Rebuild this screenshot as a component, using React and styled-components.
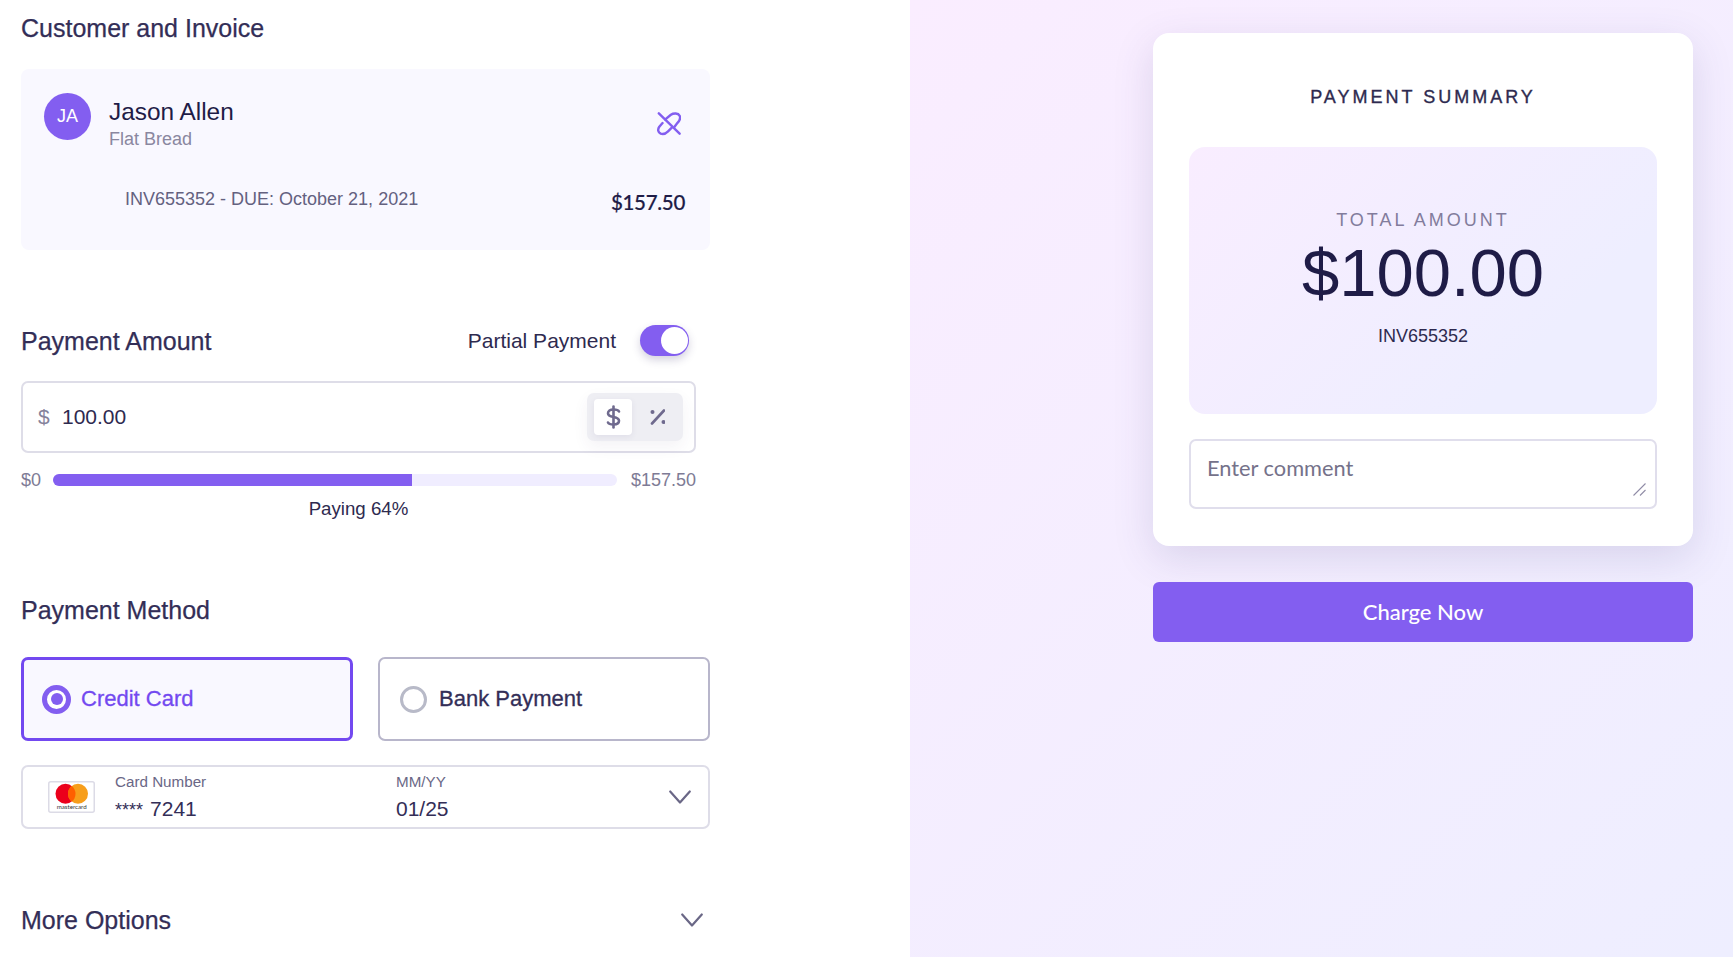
import React from "react";
import styled, { createGlobalStyle } from "styled-components";

const Global = createGlobalStyle`
  html, body { margin: 0; padding: 0; height: 100%; background: #fff; overflow: hidden; }
  #root { height: 100%; }
  * { box-sizing: border-box; }
  body { font-family: "Liberation Sans", Arial, sans-serif; color: #2e2a4f; }
`;

const Page = styled.div`
  display: flex;
  width: 1733px;
  height: 957px;
  overflow: hidden;
`;

const LeftPanel = styled.main`
  width: 910px;
  flex: none;
  padding: 0 200px 0 21px;
  background: #fff;
`;

const RightPanel = styled.aside`
  flex: 1;
  padding: 33px 40px 0 243px;
  background: linear-gradient(135deg, #faedff 0%, #eeeeff 100%);
`;

const Heading = styled.h2`
  margin: ${(p) => p.$top || 0}px 0 0;
  font-size: 25px;
  line-height: 32px;
  font-weight: 400;
  color: #332e57;
  -webkit-text-stroke: 0.25px #332e57;
`;

const TopHeading = styled(Heading)`
  padding-top: 12px;
`;

const CustomerCard = styled.section`
  margin-top: 25px;
  height: 181px;
  padding: 24px 25px 0 23px;
  background: #f9f8ff;
  border-radius: 8px;
`;

const CustomerRow = styled.div`
  display: flex;
  align-items: flex-start;
`;

const Avatar = styled.div`
  width: 47px;
  height: 47px;
  border-radius: 50%;
  background: #835ef0;
  color: #fff;
  font-size: 18px;
  display: flex;
  align-items: center;
  justify-content: center;
`;

const CustomerInfo = styled.div`
  margin: 4px 0 0 18px;
`;

const CustomerName = styled.div`
  font-size: 24.4px;
  line-height: 30px;
  color: #1f1c47;
`;

const CustomerCompany = styled.div`
  font-size: 18px;
  line-height: 24px;
  color: #8a879f;
`;

const UnlinkButton = styled.div`
  margin: 19px 4px 0 auto;
  height: 24px;
  color: #835ef0;
`;

const InvoiceRow = styled.div`
  display: flex;
  justify-content: space-between;
  padding: 36px 0 0 81px;
`;

const InvoiceText = styled.div`
  font-size: 18px;
  line-height: 24px;
  color: #64617f;
`;

const InvoiceAmount = styled.div`
  font-family: Lato, sans-serif;
  font-size: 20.5px;
  font-weight: 500;
  line-height: 28px;
  margin-top: 1px;
  letter-spacing: -0.3px;
  color: #1f1c47;
  -webkit-text-stroke: 0.2px #1f1c47;
`;

const AmountHeader = styled.div`
  margin-top: 75px;
  height: 32px;
  width: 668px;
  display: flex;
  align-items: center;
  justify-content: space-between;
`;

const ToggleGroup = styled.div`
  display: flex;
  align-items: center;
  gap: 24px;
`;

const ToggleLabel = styled.span`
  font-size: 21px;
  line-height: 32px;
  color: #2e2a4f;
`;

const Toggle = styled.span`
  position: relative;
  display: block;
  width: 49px;
  height: 31px;
  margin-top: -2px;
  border-radius: 16px;
  background: #835ef0;
  box-shadow: 0 4px 8px rgba(60, 50, 110, 0.22);
  &::after {
    content: "";
    position: absolute;
    right: 1px;
    top: 2px;
    width: 27px;
    height: 27px;
    border-radius: 50%;
    background: #fff;
  }
`;

const AmountField = styled.div`
  margin-top: 24px;
  width: 675px;
  height: 72px;
  border: 2px solid #dedde8;
  border-radius: 7px;
  padding: 0 11px 0 15px;
  display: flex;
  align-items: center;
`;

const Currency = styled.span`
  font-size: 21px;
  color: #85829b;
  width: 24px;
`;

const AmountValue = styled.span`
  font-size: 21px;
  color: #2e2a4f;
  flex: 1;
`;

const UnitSwitch = styled.div`
  width: 96px;
  height: 48px;
  padding: 6px 7px;
  border-radius: 7px;
  background: #eeeef3;
  display: flex;
  gap: 5px;
  box-shadow: 0 6px 16px rgba(60, 50, 110, 0.06);
`;

const UnitOption = styled.div`
  width: 38px;
  height: 36px;
  border-radius: 4px;
  display: flex;
  align-items: center;
  justify-content: center;
  color: #6f6a8e;
  background: ${(p) => (p.$active ? "#fff" : "transparent")};
  box-shadow: ${(p) => (p.$active ? "0 2px 6px rgba(60,50,110,.08)" : "none")};
`;

const SliderRow = styled.div`
  margin-top: 13px;
  width: 675px;
  height: 28px;
  display: flex;
  align-items: center;
  justify-content: space-between;
`;

const SliderLabel = styled.span`
  font-size: 18px;
  color: #7e7b95;
`;

const Track = styled.div`
  width: 564px;
  height: 12px;
  border-radius: 6px;
  background: #f0edff;
  margin-left: 12px;
  margin-right: 13px;
  overflow: hidden;
`;

const Fill = styled.div`
  height: 100%;
  background: #835ef0;
`;

const PayingText = styled.div`
  margin-top: 3px;
  width: 675px;
  text-align: center;
  font-size: 18.7px;
  line-height: 24px;
  color: #2e2a4f;
`;

const MethodGrid = styled.div`
  margin-top: 31px;
  display: grid;
  grid-template-columns: 1fr 1fr;
  gap: 25px;
`;

const MethodOption = styled.div`
  height: 84px;
  border-radius: 7px;
  display: flex;
  align-items: center;
  padding-left: ${(p) => (p.$selected ? "18px" : "20px")};
  gap: ${(p) => (p.$selected ? "10px" : "12px")};
  border: ${(p) => (p.$selected ? "3px solid #7349f0" : "2px solid #b8b6cb")};
  background: ${(p) => (p.$selected ? "#f9f8ff" : "#fff")};
  color: ${(p) => (p.$selected ? "#7349f0" : "#332e57")};
  font-size: 22px;
  -webkit-text-stroke: 0.3px currentColor;
`;

const Radio = styled.span`
  width: ${(p) => (p.$selected ? "29px" : "27px")};
  height: ${(p) => (p.$selected ? "29px" : "27px")};
  border-radius: 50%;
  background: #fff;
  border: ${(p) => (p.$selected ? "5px solid #835ef0" : "3px solid #b8bac8")};
  display: flex;
  align-items: center;
  justify-content: center;
  &::after {
    content: "";
    display: ${(p) => (p.$selected ? "block" : "none")};
    width: 12px;
    height: 12px;
    border-radius: 50%;
    background: #835ef0;
  }
`;

const SavedCard = styled.div`
  margin-top: 24px;
  height: 64px;
  border: 2px solid #dedde8;
  border-radius: 7px;
  padding: 0 17px 0 25px;
  display: flex;
  align-items: center;
`;

const BrandLogo = styled.div`
  width: 47px;
  height: 32px;
  margin-right: 20px;
  flex: none;
`;

const CardField = styled.div`
  width: ${(p) => p.$width}px;
  flex: none;
`;

const CardLabel = styled.div`
  font-size: 15.2px;
  line-height: 20px;
  color: #6a6786;
`;

const CardValue = styled.div`
  font-size: 21px;
  line-height: 26px;
  margin-top: 4px;
  color: #332e57;
`;

const Stars = styled.span`
  font-size: 18px;
  margin-right: 7px;
`;

const Chevron = styled.span`
  display: block;
  margin-left: auto;
  height: 14px;
  color: #6a6786;
`;

const MoreRow = styled.div`
  margin-top: 75px;
  width: 682px;
  display: flex;
  align-items: center;
  justify-content: space-between;
`;

const SummaryCard = styled.section`
  height: 513px;
  padding: 0 36px;
  background: #fff;
  border-radius: 16px;
  box-shadow: 0 12px 40px rgba(70, 60, 130, 0.15);
`;

const SummaryTitle = styled.h3`
  margin: 0;
  padding-top: 52px;
  text-align: center;
  font-size: 18px;
  line-height: 24px;
  font-weight: 400;
  letter-spacing: 3px;
  color: #2e2a4f;
  -webkit-text-stroke: 0.35px #2e2a4f;
`;

const TotalBox = styled.div`
  margin-top: 38px;
  height: 267px;
  padding-top: 61px;
  border-radius: 16px;
  text-align: center;
  background: linear-gradient(135deg, #f9edff 0%, #eeeeff 75%);
`;

const TotalLabel = styled.div`
  font-size: 18px;
  line-height: 24px;
  letter-spacing: 3px;
  color: #827c9c;
`;

const TotalValue = styled.div`
  margin-top: 1px;
  font-size: 67px;
  line-height: 80px;
  color: #1f1c47;
`;

const TotalInvoice = styled.div`
  margin-top: 11px;
  font-size: 18px;
  line-height: 24px;
  color: #2e2a4f;
`;

const CommentWrap = styled.div`
  position: relative;
  margin-top: 25px;
  height: 70px;
`;

const Comment = styled.textarea`
  display: block;
  width: 100%;
  height: 100%;
  resize: none;
  border: 2px solid #e0deec;
  border-radius: 7px;
  padding: 13px 16px;
  outline: none;
  font-family: Lato, sans-serif;
  font-size: 21.8px;
  line-height: 28px;
  color: #2e2a4f;
  &::placeholder { color: #75728a; opacity: 1; }
`;

const Grip = styled.svg`
  position: absolute;
  right: 11px;
  bottom: 13px;
`;

const ChargeButton = styled.button`
  display: block;
  width: 100%;
  height: 60px;
  margin-top: 36px;
  padding-bottom: 2px;
  border: 0;
  border-radius: 6px;
  background: #835ef0;
  color: #fff;
  font-family: Lato, sans-serif;
  font-size: 22px;
  font-weight: 500;
`;

const ChevronIcon = ({ w = 22, h = 12 }) => (
  <svg width={w} height={h + 2} viewBox="0 0 22 14" fill="none" stroke="currentColor" strokeWidth="2.2" strokeLinecap="round" strokeLinejoin="round">
    <path d="M1.2 1.5 L11 12.5 L20.8 1.5" />
  </svg>
);

const UnlinkIcon = () => (
  <svg width="24" height="24" viewBox="-1 -1 26 26" fill="none" stroke="currentColor" strokeWidth="2.6" strokeLinecap="round">
    <path d="M8 7 L14 2 C17 0 22 0 23.5 3 C25 6 23 9 21 11 L18 15" />
    <path d="M5 11 L1.5 15 C-0.5 18 0 21 3 22.5 C6 23.5 9 22 11 20 L15 16" />
    <path d="M1 0.5 L23.5 22.5" />
  </svg>
);

const DollarIcon = () => (
  <svg width="15" height="24" viewBox="0 0 15 24" fill="none" stroke="currentColor" strokeWidth="2.6" strokeLinecap="round">
    <path d="M7.5 1.5 V22.5" />
    <path d="M13 6.5 C12.3 5 10.5 4.5 7.5 4.5 C4 4.5 2 6 2 8.2 C2 10.6 4.5 11.4 7.5 12 C10.5 12.6 13 13.4 13 15.8 C13 18 11 19.5 7.5 19.5 C4.5 19.5 2.7 19 2 17.5" />
  </svg>
);

const PercentIcon = () => (
  <svg width="18" height="18" viewBox="-2 0 18 18" fill="currentColor" stroke="currentColor" strokeLinecap="round">
    <path d="M15 2.5 L3 15.5" fill="none" strokeWidth="2.6" />
    <circle cx="3.5" cy="4" r="2" stroke="none" />
    <circle cx="14.5" cy="14" r="2" stroke="none" />
  </svg>
);

const MastercardLogo = () => (
  <svg width="47" height="32" viewBox="0 0 47 32">
    <rect x="0.75" y="0.75" width="45.5" height="30.5" rx="2" fill="#fff" stroke="#dcdbe6" strokeWidth="1.5" />
    <circle cx="17.5" cy="12.8" r="10" fill="#eb001b" />
    <circle cx="30" cy="12.8" r="10" fill="#f79e1b" />
    <path d="M23.75 5 A10 10 0 0 1 23.75 20.6 A10 10 0 0 1 23.75 5 Z" fill="#ff5f00" />
    <text x="23.7" y="28.2" textAnchor="middle" fontSize="6.2" fontFamily="Lato, sans-serif" fill="#333">mastercard</text>
  </svg>
);

export default function App() {
  return (
    <Page>
      <Global />
      <LeftPanel>
        <TopHeading>Customer and Invoice</TopHeading>
        <CustomerCard>
          <CustomerRow>
            <Avatar>JA</Avatar>
            <CustomerInfo>
              <CustomerName>Jason Allen</CustomerName>
              <CustomerCompany>Flat Bread</CustomerCompany>
            </CustomerInfo>
            <UnlinkButton><UnlinkIcon /></UnlinkButton>
          </CustomerRow>
          <InvoiceRow>
            <InvoiceText>INV655352 - DUE: October 21, 2021</InvoiceText>
            <InvoiceAmount>$157.50</InvoiceAmount>
          </InvoiceRow>
        </CustomerCard>

        <AmountHeader>
          <Heading>Payment Amount</Heading>
          <ToggleGroup>
            <ToggleLabel>Partial Payment</ToggleLabel>
            <Toggle />
          </ToggleGroup>
        </AmountHeader>
        <AmountField>
          <Currency>$</Currency>
          <AmountValue>100.00</AmountValue>
          <UnitSwitch>
            <UnitOption $active><DollarIcon /></UnitOption>
            <UnitOption><PercentIcon /></UnitOption>
          </UnitSwitch>
        </AmountField>
        <SliderRow>
          <SliderLabel>$0</SliderLabel>
          <Track><Fill style={{ width: `${(100 / 157.5) * 100}%` }} /></Track>
          <SliderLabel>$157.50</SliderLabel>
        </SliderRow>
        <PayingText>Paying 64%</PayingText>

        <Heading $top={73}>Payment Method</Heading>
        <MethodGrid>
          <MethodOption $selected><Radio $selected />Credit Card</MethodOption>
          <MethodOption><Radio />Bank Payment</MethodOption>
        </MethodGrid>
        <SavedCard>
          <BrandLogo><MastercardLogo /></BrandLogo>
          <CardField $width={281}>
            <CardLabel>Card Number</CardLabel>
            <CardValue><Stars>****</Stars>7241</CardValue>
          </CardField>
          <CardField $width={150}>
            <CardLabel>MM/YY</CardLabel>
            <CardValue>01/25</CardValue>
          </CardField>
          <Chevron><ChevronIcon /></Chevron>
        </SavedCard>
        <MoreRow>
          <Heading>More Options</Heading>
          <Chevron><ChevronIcon /></Chevron>
        </MoreRow>
      </LeftPanel>

      <RightPanel>
        <SummaryCard>
          <SummaryTitle>PAYMENT SUMMARY</SummaryTitle>
          <TotalBox>
            <TotalLabel>TOTAL AMOUNT</TotalLabel>
            <TotalValue>$100.00</TotalValue>
            <TotalInvoice>INV655352</TotalInvoice>
          </TotalBox>
          <CommentWrap>
            <Comment placeholder="Enter comment" />
            <Grip width="13" height="13" viewBox="0 0 13 13" fill="none" stroke="#8f8ca6" strokeWidth="1.1">
              <path d="M0.5 12.5 L12.5 0.5" />
              <path d="M7 12.5 L12.5 7" />
            </Grip>
          </CommentWrap>
        </SummaryCard>
        <ChargeButton>Charge Now</ChargeButton>
      </RightPanel>
    </Page>
  );
}
